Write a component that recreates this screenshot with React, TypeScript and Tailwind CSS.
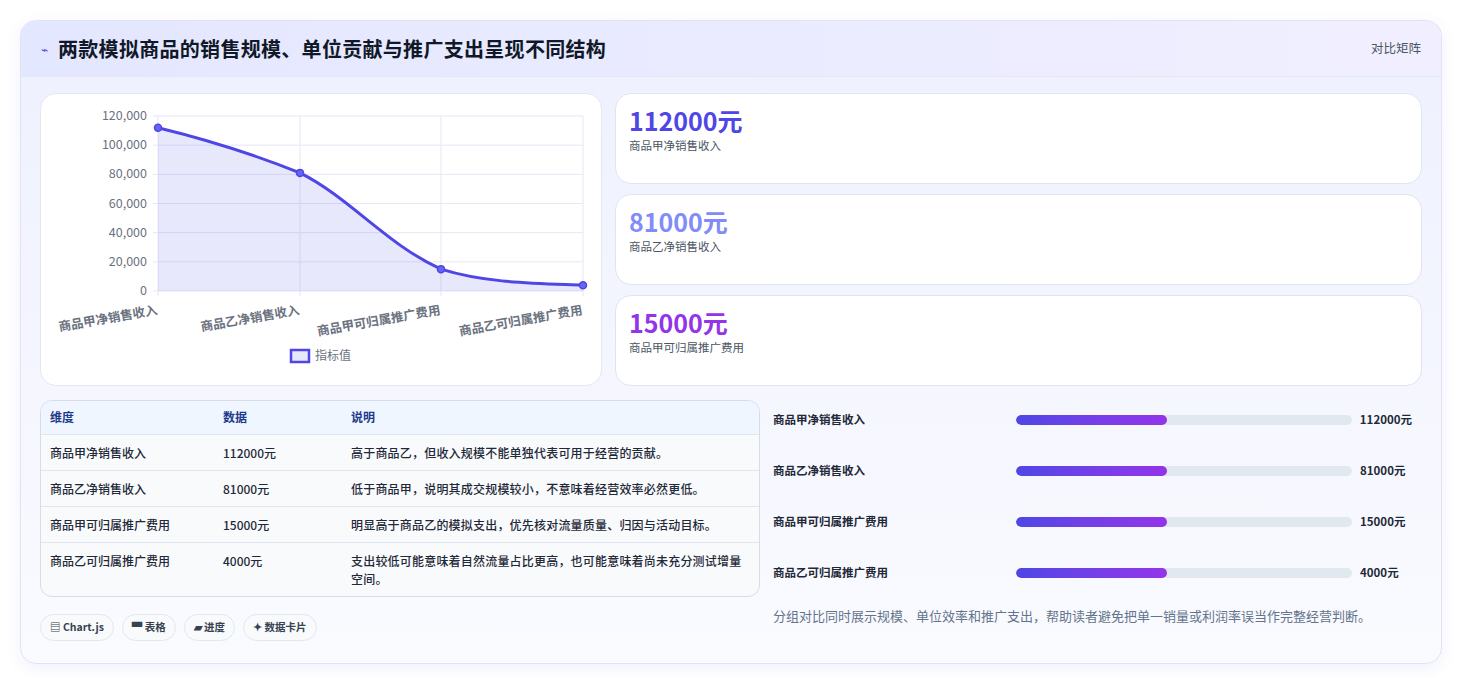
const font = { fontFamily: '"Noto Sans CJK SC", "Noto Sans", sans-serif' };

const metrics = [
  { value: '112000元', label: '商品甲净销售收入', color: 'text-[#4f46e5]' },
  { value: '81000元', label: '商品乙净销售收入', color: 'text-[#818cf8]' },
  { value: '15000元', label: '商品甲可归属推广费用', color: 'text-[#9333ea]' },
];

const rows = [
  ['商品甲净销售收入', '112000元', '高于商品乙，但收入规模不能单独代表可用于经营的贡献。'],
  ['商品乙净销售收入', '81000元', '低于商品甲，说明其成交规模较小，不意味着经营效率必然更低。'],
  ['商品甲可归属推广费用', '15000元', '明显高于商品乙的模拟支出，优先核对流量质量、归因与活动目标。'],
  ['商品乙可归属推广费用', '4000元', '支出较低可能意味着自然流量占比更高，也可能意味着尚未充分测试增量空间。'],
];

const bars = [
  ['商品甲净销售收入', '112000元'],
  ['商品乙净销售收入', '81000元'],
  ['商品甲可归属推广费用', '15000元'],
  ['商品乙可归属推广费用', '4000元'],
];

function Chart() {
  const x = [117, 259, 400, 542];
  const vals = [112000, 81000, 15000, 4000];
  const y = vals.map((v) => 197 - (v / 120000) * 175);
  const ticks = [0, 20000, 40000, 60000, 80000, 100000, 120000];
  const line = `M${x[0]},${y[0]} C${x[0] + 50},${y[0] + 12} ${x[1] - 50},${y[1] - 20} ${x[1]},${y[1]} C${x[1] + 50},${y[1] + 25} ${x[2] - 55},${y[2] - 25} ${x[2]},${y[2]} C${x[2] + 45},${y[2] + 14} ${x[3] - 50},${y[3] - 2} ${x[3]},${y[3]}`;
  return (
    <svg width="561" height="292" className="block">
      {ticks.map((t) => {
        const ty = 197 - (t / 120000) * 175;
        return (
          <g key={t}>
            <line x1="112" x2="542" y1={ty} y2={ty} stroke="#e5e7f5" />
            <text x="106" y={ty + 4} textAnchor="end" fontSize="12.5" fill="#6b7280">
              {t.toLocaleString('en-US')}
            </text>
          </g>
        );
      })}
      {x.map((xx) => (
        <line key={xx} x1={xx} x2={xx} y1="22" y2="202" stroke="#e5e7f5" />
      ))}
      <path d={`${line} L542,197 L117,197 Z`} fill="rgba(99,102,241,0.15)" />
      <path d={line} fill="none" stroke="#4f46e5" strokeWidth="3" />
      {x.map((xx, i) => (
        <circle key={i} cx={xx} cy={y[i]} r="3.5" fill="#6366f1" stroke="#4f46e5" strokeWidth="1.5" />
      ))}
      {['商品甲净销售收入', '商品乙净销售收入', '商品甲可归属推广费用', '商品乙可归属推广费用'].map((l, i) => (
        <text key={l} x={x[i]} y="220" textAnchor="end" fontSize="12.5" fontWeight="600" fill="#6b7280" transform={`rotate(-10 ${x[i]} 220)`}>
          {l}
        </text>
      ))}
      <rect x="250" y="256" width="18" height="12" fill="rgba(99,102,241,0.15)" stroke="#4f46e5" strokeWidth="2.5" />
      <text x="274" y="266" fontSize="12" fill="#6b7280">指标值</text>
    </svg>
  );
}

export default function App() {
  return (
    <div className="min-h-screen bg-white p-[20px]" style={font}>
      <div className="rounded-2xl border border-[#dfe3f3] bg-gradient-to-b from-[#eef0fe] to-[#fafbff] shadow-[0_4px_16px_rgba(79,70,229,0.08)] overflow-hidden">
        <div className="flex items-center justify-between h-[56px] px-[20px] bg-gradient-to-r from-[#e3e7ff] to-[#f1efff] border-b border-[#e5e7f5]">
          <div className="flex items-center gap-[10px]">
            <span className="text-[#4f46e5] text-[12px]">⌁</span>
            <h1 className="text-[20px] font-bold text-[#111827] tracking-[0.3px]">两款模拟商品的销售规模、单位贡献与推广支出呈现不同结构</h1>
          </div>
          <span className="text-[12.5px] text-[#4b5563]">对比矩阵</span>
        </div>
        <div className="px-[19px] pt-[16px] pb-[22px]">
          <div className="flex gap-[13px]">
            <div className="w-[562px] h-[293px] rounded-2xl border border-[#e5e7f0] bg-white overflow-hidden">
              <Chart />
            </div>
            <div className="flex-1 flex flex-col gap-[10px]">
              {metrics.map((m) => (
                <div key={m.value} className="h-[91px] rounded-2xl border border-[#e0e4f0] bg-white px-[13px] pt-[9px]">
                  <div className={`text-[25px] font-bold leading-[34px] ${m.color}`}>{m.value}</div>
                  <div className="text-[11.5px] text-[#4b5563]">{m.label}</div>
                </div>
              ))}
            </div>
          </div>
          <div className="flex gap-[13px] mt-[14px]">
            <div className="w-[720px]">
              <div className="rounded-xl border border-[#d6dce8] overflow-hidden bg-[#f8fafc]">
                <table className="w-full text-[12px] text-[#1f2937] font-medium">
                  <thead>
                    <tr className="bg-[#eff6ff] text-[#1e3a8a] text-left">
                      <th className="font-semibold h-[33px] pl-[9px] w-[182px]">维度</th>
                      <th className="font-semibold w-[128px]">数据</th>
                      <th className="font-semibold">说明</th>
                    </tr>
                  </thead>
                  <tbody>
                    {rows.map((r) => (
                      <tr key={r[0]} className="border-t border-[#dfe5ee] align-top">
                        <td className="pl-[9px] pt-[9px] pb-[8px]">{r[0]}</td>
                        <td className="pt-[9px]">{r[1]}</td>
                        <td className="pt-[9px] pb-[8px] pr-[8px] leading-[18px] tracking-[0.2px]">{r[2]}</td>
                      </tr>
                    ))}
                  </tbody>
                </table>
              </div>
              <div className="flex gap-[8px] mt-[17px]">
                {['▤ Chart.js', '▀ 表格', '▰ 进度', '✦ 数据卡片'].map((c) => (
                  <span key={c} className="h-[27px] px-[9px] flex items-center rounded-full border border-[#e2e6ef] bg-[#f8fafc] text-[10.5px] font-semibold text-[#374151]">
                    {c}
                  </span>
                ))}
              </div>
            </div>
            <div className="flex-1 pr-[10px] -mt-[6px]">
              {bars.map((b) => (
                <div key={b[0]} className="flex items-center h-[51px] text-[11.5px] font-semibold text-[#1f2937]">
                  <div className="w-[243px]">{b[0]}</div>
                  <div className="w-[336px] h-[10px] rounded-full bg-[#e2e8f0] overflow-hidden">
                    <div className="h-full w-[45%] rounded-full bg-gradient-to-r from-[#4f46e5] to-[#9333ea]" />
                  </div>
                  <div className="ml-[8px]">{b[1]}</div>
                </div>
              ))}
              <p className="mt-[8px] text-[13px] text-[#64748b]">分组对比同时展示规模、单位效率和推广支出，帮助读者避免把单一销量或利润率误当作完整经营判断。</p>
            </div>
          </div>
        </div>
      </div>
    </div>
  );
}
